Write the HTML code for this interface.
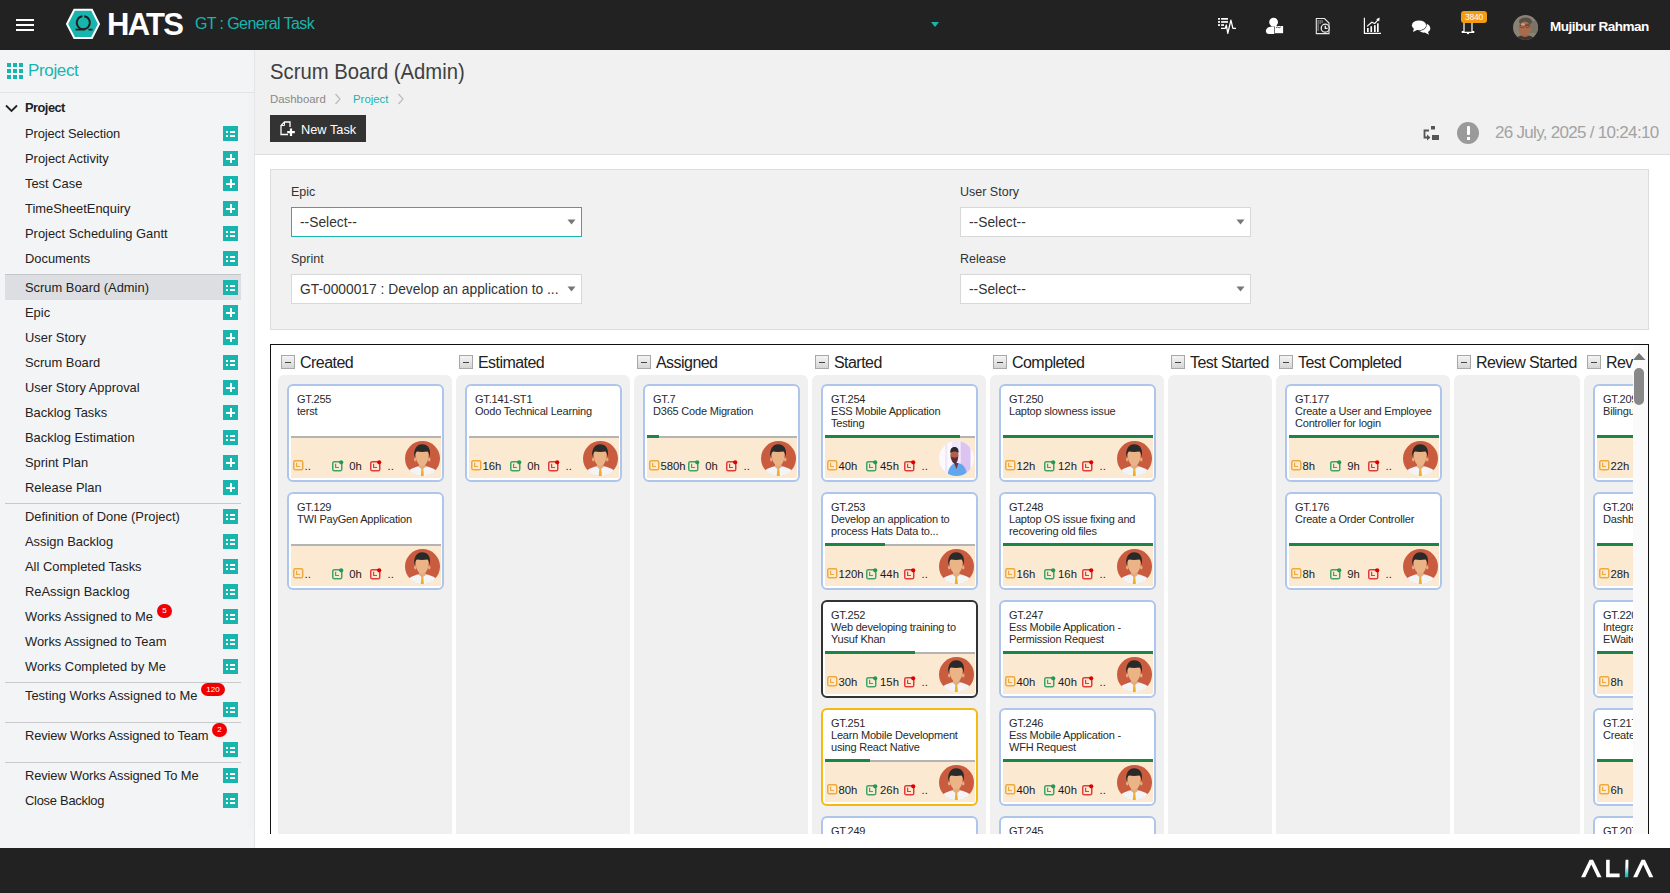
<!DOCTYPE html>
<html><head><meta charset="utf-8"><style>
*{margin:0;padding:0;box-sizing:border-box}
html,body{width:1670px;height:893px;overflow:hidden;background:#fff;font-family:"Liberation Sans", sans-serif}
.t{position:absolute;white-space:nowrap;line-height:1.15}
#hd{position:absolute;left:0;top:0;width:1670px;height:50px;background:#222;z-index:5}
#sb{position:absolute;left:0;top:0;width:255px;height:848px;background:#f3f4f6;border-right:1px solid #e3e4e6}
#sb > *{}
#sbwrap{position:absolute;left:0;top:0}
.hr{position:absolute;height:1px}
.grid i{position:absolute;width:4px;height:4px;background:#17b5ad}
.si{font-size:12.9px;color:#222}
.sic{position:absolute;width:15px;height:15px;background:#17b5ad}
.sic i{position:absolute;background:#fff}
.badge{position:absolute;background:#f00000;color:#fff;font-size:8px;text-align:center;line-height:14px}
#mh{position:absolute;left:255px;top:50px;width:1415px;height:105px;background:#f1f1f1;border-bottom:1px solid #dedede}
#fp{position:absolute;left:270px;top:169px;width:1379px;height:161px;background:#f1f1f1;border:1px solid #dcdcdc}
.fl{font-size:12.5px;color:#333}
.sel{position:absolute;width:291px;height:30px;background:#fff;border:1px solid #d8d8d8}
#bd{position:absolute;left:270px;top:344px;width:1379px;height:490px;border:1px solid #111;border-bottom:none;overflow:hidden}
#bdin{position:absolute;left:0;top:0;width:1363px;height:490px;overflow:hidden}
#sbar{position:absolute;left:1362px;top:0;width:16px;height:490px;background:#fafafa}
.colbg{position:absolute;height:600px;background:#f0f0f0;border-radius:6px}
.cbx{position:absolute;width:14px;height:14px;border:1px solid #a8a8a8;background:linear-gradient(#f4f4f4,#d6d6d6)}
.cbx i{position:absolute;left:3px;top:5.5px;width:6px;height:1.5px;background:#444}
.ch{font-size:16px;letter-spacing:-0.55px;color:#222}
.card{position:absolute;width:157px;height:98px;border:2px solid #aec6ec;border-radius:6px;background:#fff;overflow:hidden}
.ct{position:absolute;left:8px;top:7px;font-size:11px;letter-spacing:-0.2px;line-height:12px;color:#2a2a2a;white-space:nowrap}
.cl{position:absolute;left:1.5px;top:50px;width:150px;height:2px;background:#b4b4b4}
.pg{position:absolute;left:0;top:-1px;height:3px;background:#1b8449}
.cf{position:absolute;left:1.5px;top:52px;width:150px;height:40px;background:#fce9d1}
.ic{position:absolute;top:22px}
.cn{position:absolute;top:22px;font-size:11.3px;color:#1a1a1a;white-space:nowrap}
.av{position:absolute;left:114.5px;top:3px}
#ft{position:absolute;left:0;top:848px;width:1670px;height:45px;background:#222}
</style></head><body>
<div id="hd">
<div style="position:absolute;left:16px;top:19px;width:18px;height:2.2px;background:#fff"></div>
<div style="position:absolute;left:16px;top:24px;width:18px;height:2.2px;background:#fff"></div>
<div style="position:absolute;left:16px;top:29px;width:18px;height:2.2px;background:#fff"></div>
<svg style="position:absolute;left:62px;top:5px" width="42" height="38" viewBox="0 0 42 38">
<polygon points="12.3,4.8 29.9,4.8 37,19 29.9,33 12.3,33 5,19" fill="#17b5ad" stroke="#fff" stroke-width="2"/>
<path d="M20.4 11.2 A6.5 6.5 0 1 0 22.2 11.2" fill="none" stroke="#2a1c1c" stroke-width="1.9"/>
<path d="M13.5 24.6 H23 M26.5 24.6 H30.5" stroke="#2a1c1c" stroke-width="1.9"/>
</svg>
<div class="t" style="left:107px;top:6.9px;font-size:31px;font-weight:bold;color:#fff;letter-spacing:-1.75px">HATS</div>
<div class="t" style="left:195px;top:15px;font-size:16px;letter-spacing:-0.6px;color:#17b5ad">GT : General Task</div>
<svg style="position:absolute;left:930px;top:21px" width="10" height="7"><path d="M1 1 H9 L5 6 Z" fill="#17b5ad"/></svg>

<svg style="position:absolute;left:1217px;top:17px" width="20" height="18" viewBox="0 0 20 18">
<g fill="#fff"><rect x="1" y="1" width="2" height="1.7"/><rect x="4.1" y="1" width="6.9" height="1.7"/>
<rect x="1" y="4.1" width="2" height="1.7"/><rect x="4.1" y="4.1" width="6.9" height="1.7"/>
<rect x="1" y="7.2" width="2" height="1.7"/><rect x="4.1" y="7.2" width="2.9" height="1.7"/></g>
<path d="M4 11.3 H8.3 L9.3 8 L10.8 16.3 L13.9 3.2 L15.9 11.3 H19" fill="none" stroke="#fff" stroke-width="1.3" stroke-linejoin="round"/></svg>
<svg style="position:absolute;left:1265px;top:17px" width="19" height="18" viewBox="0 0 19 18">
<circle cx="8.6" cy="5.1" r="4.4" fill="#fff"/><path d="M0.9 14 C0.9 11 4 9.4 8 9.4 L9.3 9.4 V17 L4 17 C2 17 0.9 15.8 0.9 14 Z" fill="#fff"/>
<rect x="9.9" y="9" width="8.2" height="7.2" fill="#fff"/><path d="M10.8 10.8 l1.8 -0.8 1.5 0.8 1.8 -1" stroke="#222" stroke-width="0.7" fill="none"/></svg>
<svg style="position:absolute;left:1315px;top:17px" width="16" height="18" viewBox="0 0 16 18">
<path d="M1.3 1.5 H9.5 L14 6 V16.6 H1.3 Z" fill="none" stroke="#e8e8e8" stroke-width="1.1"/>
<g fill="#999"><rect x="2.6" y="3" width="1" height="11"/><rect x="4.6" y="3" width="1" height="4"/><rect x="6.6" y="3" width="1" height="3"/></g>
<circle cx="10.2" cy="11.2" r="4" fill="#222" stroke="#eee" stroke-width="1.3"/><path d="M10.3 8.8 V11.4 H12.5" stroke="#eee" stroke-width="1.4" fill="none"/></svg>
<svg style="position:absolute;left:1363px;top:17px" width="19" height="18" viewBox="0 0 19 18">
<path d="M1.4 0.7 V16.4 H18" fill="none" stroke="#fff" stroke-width="1.2"/>
<g fill="#fff"><rect x="4" y="11" width="1.7" height="4"/><rect x="7.4" y="9.2" width="1.7" height="5.8"/><rect x="11" y="8.2" width="1.7" height="6.8"/><rect x="14" y="6.3" width="1.7" height="8.7"/></g>
<path d="M4 9.4 L8.8 5.2 L11.7 6.6 L15.2 2.6" stroke="#fff" stroke-width="1.2" fill="none"/><path d="M13.2 2.2 L16.6 0.4 L16.3 4.4 Z" fill="#fff"/></svg>
<svg style="position:absolute;left:1411px;top:20px" width="20" height="15" viewBox="0 0 20 15">
<ellipse cx="8" cy="5.3" rx="7.1" ry="4.9" fill="#fff"/><path d="M3 8 L2 12 L7 9.5 Z" fill="#fff"/>
<path d="M15.8 3.8 C18.2 5 19.3 6.5 19.3 8.3 C19.3 10 18.4 11.3 17 12 L18 14.8 L13.8 12.6 C11.5 12.8 9.5 12 8.3 10.8 C12.5 10.8 16 8.3 15.8 3.8 Z" fill="#fff"/>
</svg>
<svg style="position:absolute;left:1460px;top:20px" width="16" height="15" viewBox="0 0 16 15">
<path d="M4 1 V11.5 H2.3 V12.4 H13.7 V11.5 H12 V1" fill="none" stroke="#fff" stroke-width="1.2"/><circle cx="8" cy="13.2" r="1.1" fill="#fff"/></svg>

<div class="badge" style="left:1461px;top:11px;width:26px;height:12px;border-radius:3px;background:#f39c12;font-size:8.5px;letter-spacing:-0.2px;line-height:12px">3840</div>
<svg style="position:absolute;left:1513px;top:15px" width="25" height="25" viewBox="0 0 25 25">
<defs><clipPath id="ac"><circle cx="12.5" cy="12.5" r="12.5"/></clipPath></defs>
<g clip-path="url(#ac)"><rect width="25" height="25" fill="#8a8272"/><rect x="17" y="6" width="8" height="12" fill="#7a7466"/>
<ellipse cx="12.5" cy="6.5" rx="6.5" ry="4" fill="#55504a"/>
<path d="M3 25 C4 21 7 20.5 12 20.5 C17 20.5 20 21 22 25 Z" fill="#3a3434"/>
<rect x="9.5" y="17" width="5" height="5" fill="#9a5a40"/>
<ellipse cx="11.8" cy="13.8" rx="6" ry="7.2" fill="#a86b4d"/>
<path d="M6.5 10 H17" stroke="#55463e" stroke-width="1"/><ellipse cx="9" cy="11.5" rx="2" ry="1.2" fill="none" stroke="#4a3c36" stroke-width="0.6"/><ellipse cx="14.5" cy="11.5" rx="2" ry="1.2" fill="none" stroke="#4a3c36" stroke-width="0.6"/>
<ellipse cx="10" cy="9.5" rx="2" ry="1.3" fill="#d4a080"/></g></svg>
<div class="t" style="left:1550px;top:18.8px;font-size:13.5px;font-weight:bold;color:#fff;letter-spacing:-0.5px">Mujibur Rahman</div>
</div>
<div id="sb">
<div class="grid"><i style="left:7px;top:63px"></i><i style="left:13px;top:63px"></i><i style="left:19px;top:63px"></i><i style="left:7px;top:69px"></i><i style="left:13px;top:69px"></i><i style="left:19px;top:69px"></i><i style="left:7px;top:75px"></i><i style="left:13px;top:75px"></i><i style="left:19px;top:75px"></i></div>
<div class="t" style="left:28px;top:61px;font-size:17px;letter-spacing:-0.35px;color:#17b5ad">Project</div>
<div style="position:absolute;left:248px;top:93px;width:6px;height:734px;background:#f2f2f3"></div>
<div class="hr" style="left:0;top:92px;width:254px;background:#e2e3e5"></div>
<svg style="position:absolute;left:5px;top:104px" width="13" height="9" viewBox="0 0 13 9"><path d="M1 1.5 L6.5 7 L12 1.5" fill="none" stroke="#222" stroke-width="1.8"/></svg>
<div class="t" style="left:25px;top:100.5px;font-size:12.8px;letter-spacing:-0.5px;font-weight:bold;color:#222">Project</div>
<div class="t si" style="left:25px;top:126.5px;letter-spacing:-0.1px">Project Selection</div>
<div class="sic" style="left:223px;top:126px"><i style="left:3px;top:4.6px;width:2.2px;height:2px"></i><i style="left:7px;top:4.6px;width:5px;height:2px"></i><i style="left:3px;top:8.8px;width:2.2px;height:2px"></i><i style="left:7px;top:8.8px;width:5px;height:2px"></i></div>
<div class="t si" style="left:25px;top:151.5px;letter-spacing:0px">Project Activity</div>
<div class="sic" style="left:223px;top:151px"><i style="left:3px;top:6.5px;width:9px;height:2px"></i><i style="left:6.5px;top:3px;width:2px;height:9px"></i></div>
<div class="t si" style="left:25px;top:176.5px;letter-spacing:0px">Test Case</div>
<div class="sic" style="left:223px;top:176px"><i style="left:3px;top:6.5px;width:9px;height:2px"></i><i style="left:6.5px;top:3px;width:2px;height:9px"></i></div>
<div class="t si" style="left:25px;top:201.5px;letter-spacing:0px">TimeSheetEnquiry</div>
<div class="sic" style="left:223px;top:201px"><i style="left:3px;top:6.5px;width:9px;height:2px"></i><i style="left:6.5px;top:3px;width:2px;height:9px"></i></div>
<div class="t si" style="left:25px;top:226.5px;letter-spacing:0px">Project Scheduling Gantt</div>
<div class="sic" style="left:223px;top:226px"><i style="left:3px;top:4.6px;width:2.2px;height:2px"></i><i style="left:7px;top:4.6px;width:5px;height:2px"></i><i style="left:3px;top:8.8px;width:2.2px;height:2px"></i><i style="left:7px;top:8.8px;width:5px;height:2px"></i></div>
<div class="t si" style="left:25px;top:251.5px;letter-spacing:0px">Documents</div>
<div class="sic" style="left:223px;top:251px"><i style="left:3px;top:4.6px;width:2.2px;height:2px"></i><i style="left:7px;top:4.6px;width:5px;height:2px"></i><i style="left:3px;top:8.8px;width:2.2px;height:2px"></i><i style="left:7px;top:8.8px;width:5px;height:2px"></i></div>
<div class="hr" style="left:5px;top:274px;width:236px;background:#c9c9c9"></div>
<div style="position:absolute;left:5px;top:274px;width:236px;height:26px;background:#dcdee2;border-top:1px solid #c4c6ca;box-sizing:border-box"></div>
<div class="t si" style="left:25px;top:280.5px;letter-spacing:0px">Scrum Board (Admin)</div>
<div class="sic" style="left:223px;top:280px"><i style="left:3px;top:4.6px;width:2.2px;height:2px"></i><i style="left:7px;top:4.6px;width:5px;height:2px"></i><i style="left:3px;top:8.8px;width:2.2px;height:2px"></i><i style="left:7px;top:8.8px;width:5px;height:2px"></i></div>
<div class="t si" style="left:25px;top:305.5px;letter-spacing:0px">Epic</div>
<div class="sic" style="left:223px;top:305px"><i style="left:3px;top:6.5px;width:9px;height:2px"></i><i style="left:6.5px;top:3px;width:2px;height:9px"></i></div>
<div class="t si" style="left:25px;top:330.5px;letter-spacing:0px">User Story</div>
<div class="sic" style="left:223px;top:330px"><i style="left:3px;top:6.5px;width:9px;height:2px"></i><i style="left:6.5px;top:3px;width:2px;height:9px"></i></div>
<div class="t si" style="left:25px;top:355.5px;letter-spacing:0px">Scrum Board</div>
<div class="sic" style="left:223px;top:355px"><i style="left:3px;top:4.6px;width:2.2px;height:2px"></i><i style="left:7px;top:4.6px;width:5px;height:2px"></i><i style="left:3px;top:8.8px;width:2.2px;height:2px"></i><i style="left:7px;top:8.8px;width:5px;height:2px"></i></div>
<div class="t si" style="left:25px;top:380.5px;letter-spacing:0px">User Story Approval</div>
<div class="sic" style="left:223px;top:380px"><i style="left:3px;top:6.5px;width:9px;height:2px"></i><i style="left:6.5px;top:3px;width:2px;height:9px"></i></div>
<div class="t si" style="left:25px;top:405.5px;letter-spacing:0px">Backlog Tasks</div>
<div class="sic" style="left:223px;top:405px"><i style="left:3px;top:6.5px;width:9px;height:2px"></i><i style="left:6.5px;top:3px;width:2px;height:9px"></i></div>
<div class="t si" style="left:25px;top:430.5px;letter-spacing:0px">Backlog Estimation</div>
<div class="sic" style="left:223px;top:430px"><i style="left:3px;top:4.6px;width:2.2px;height:2px"></i><i style="left:7px;top:4.6px;width:5px;height:2px"></i><i style="left:3px;top:8.8px;width:2.2px;height:2px"></i><i style="left:7px;top:8.8px;width:5px;height:2px"></i></div>
<div class="t si" style="left:25px;top:455.5px;letter-spacing:0px">Sprint Plan</div>
<div class="sic" style="left:223px;top:455px"><i style="left:3px;top:6.5px;width:9px;height:2px"></i><i style="left:6.5px;top:3px;width:2px;height:9px"></i></div>
<div class="t si" style="left:25px;top:480.5px;letter-spacing:0px">Release Plan</div>
<div class="sic" style="left:223px;top:480px"><i style="left:3px;top:6.5px;width:9px;height:2px"></i><i style="left:6.5px;top:3px;width:2px;height:9px"></i></div>
<div class="hr" style="left:5px;top:503px;width:236px;background:#c9c9c9"></div>
<div class="t si" style="left:25px;top:509.5px;letter-spacing:0px">Definition of Done (Project)</div>
<div class="sic" style="left:223px;top:509px"><i style="left:3px;top:4.6px;width:2.2px;height:2px"></i><i style="left:7px;top:4.6px;width:5px;height:2px"></i><i style="left:3px;top:8.8px;width:2.2px;height:2px"></i><i style="left:7px;top:8.8px;width:5px;height:2px"></i></div>
<div class="t si" style="left:25px;top:534.5px;letter-spacing:0px">Assign Backlog</div>
<div class="sic" style="left:223px;top:534px"><i style="left:3px;top:4.6px;width:2.2px;height:2px"></i><i style="left:7px;top:4.6px;width:5px;height:2px"></i><i style="left:3px;top:8.8px;width:2.2px;height:2px"></i><i style="left:7px;top:8.8px;width:5px;height:2px"></i></div>
<div class="t si" style="left:25px;top:559.5px;letter-spacing:0px">All Completed Tasks</div>
<div class="sic" style="left:223px;top:559px"><i style="left:3px;top:4.6px;width:2.2px;height:2px"></i><i style="left:7px;top:4.6px;width:5px;height:2px"></i><i style="left:3px;top:8.8px;width:2.2px;height:2px"></i><i style="left:7px;top:8.8px;width:5px;height:2px"></i></div>
<div class="t si" style="left:25px;top:584.5px;letter-spacing:0px">ReAssign Backlog</div>
<div class="sic" style="left:223px;top:584px"><i style="left:3px;top:4.6px;width:2.2px;height:2px"></i><i style="left:7px;top:4.6px;width:5px;height:2px"></i><i style="left:3px;top:8.8px;width:2.2px;height:2px"></i><i style="left:7px;top:8.8px;width:5px;height:2px"></i></div>
<div class="t si" style="left:25px;top:609.5px;letter-spacing:0px">Works Assigned to Me</div>
<div class="sic" style="left:223px;top:609px"><i style="left:3px;top:4.6px;width:2.2px;height:2px"></i><i style="left:7px;top:4.6px;width:5px;height:2px"></i><i style="left:3px;top:8.8px;width:2.2px;height:2px"></i><i style="left:7px;top:8.8px;width:5px;height:2px"></i></div>
<div class="badge" style="left:157px;top:604px;width:15px;height:14px;border-radius:8px">5</div>
<div class="t si" style="left:25px;top:634.5px;letter-spacing:0px">Works Assigned to Team</div>
<div class="sic" style="left:223px;top:634px"><i style="left:3px;top:4.6px;width:2.2px;height:2px"></i><i style="left:7px;top:4.6px;width:5px;height:2px"></i><i style="left:3px;top:8.8px;width:2.2px;height:2px"></i><i style="left:7px;top:8.8px;width:5px;height:2px"></i></div>
<div class="t si" style="left:25px;top:659.5px;letter-spacing:0px">Works Completed by Me</div>
<div class="sic" style="left:223px;top:659px"><i style="left:3px;top:4.6px;width:2.2px;height:2px"></i><i style="left:7px;top:4.6px;width:5px;height:2px"></i><i style="left:3px;top:8.8px;width:2.2px;height:2px"></i><i style="left:7px;top:8.8px;width:5px;height:2px"></i></div>
<div class="hr" style="left:5px;top:682px;width:236px;background:#c9c9c9"></div>
<div class="t si" style="left:25px;top:688.5px;letter-spacing:0px">Testing Works Assigned to Me</div>
<div class="sic" style="left:223px;top:702px"><i style="left:3px;top:4.6px;width:2.2px;height:2px"></i><i style="left:7px;top:4.6px;width:5px;height:2px"></i><i style="left:3px;top:8.8px;width:2.2px;height:2px"></i><i style="left:7px;top:8.8px;width:5px;height:2px"></i></div>
<div class="badge" style="left:201px;top:683px;width:24px;height:13px;border-radius:7px">120</div>
<div class="hr" style="left:5px;top:722px;width:236px;background:#c9c9c9"></div>
<div class="t si" style="left:25px;top:728.5px;letter-spacing:-0.13px">Review Works Assigned to Team</div>
<div class="sic" style="left:223px;top:742px"><i style="left:3px;top:4.6px;width:2.2px;height:2px"></i><i style="left:7px;top:4.6px;width:5px;height:2px"></i><i style="left:3px;top:8.8px;width:2.2px;height:2px"></i><i style="left:7px;top:8.8px;width:5px;height:2px"></i></div>
<div class="badge" style="left:212px;top:723px;width:15px;height:14px;border-radius:8px">2</div>
<div class="hr" style="left:5px;top:762px;width:236px;background:#c9c9c9"></div>
<div class="t si" style="left:25px;top:768.5px;letter-spacing:-0.11px">Review Works Assigned To Me</div>
<div class="sic" style="left:223px;top:768px"><i style="left:3px;top:4.6px;width:2.2px;height:2px"></i><i style="left:7px;top:4.6px;width:5px;height:2px"></i><i style="left:3px;top:8.8px;width:2.2px;height:2px"></i><i style="left:7px;top:8.8px;width:5px;height:2px"></i></div>
<div class="t si" style="left:25px;top:793.5px;letter-spacing:-0.25px">Close Backlog</div>
<div class="sic" style="left:223px;top:793px"><i style="left:3px;top:4.6px;width:2.2px;height:2px"></i><i style="left:7px;top:4.6px;width:5px;height:2px"></i><i style="left:3px;top:8.8px;width:2.2px;height:2px"></i><i style="left:7px;top:8.8px;width:5px;height:2px"></i></div>
</div>
<div id="mh">
<div class="t" style="left:15px;top:8.5px;font-size:22.5px;color:#404040;transform:scaleX(0.9);transform-origin:0 0">Scrum Board (Admin)</div>
<div class="t" style="left:15px;top:42.5px;font-size:11.4px;color:#888">Dashboard</div>
<svg style="position:absolute;left:79px;top:43px" width="8" height="12"><path d="M1.5 1 L6 6 L1.5 11" fill="none" stroke="#bbb" stroke-width="1.2"/></svg>
<div class="t" style="left:98px;top:42.5px;font-size:11.4px;color:#17b5ad">Project</div>
<svg style="position:absolute;left:142px;top:43px" width="8" height="12"><path d="M1.5 1 L6 6 L1.5 11" fill="none" stroke="#bbb" stroke-width="1.2"/></svg>
<div style="position:absolute;left:15px;top:65px;width:96px;height:27px;background:#333">
<svg style="position:absolute;left:10px;top:6px" width="15" height="16" viewBox="0 0 15 16"><path d="M8 13.5 H1 V4.5 L4.5 1 H10 V6" fill="none" stroke="#fff" stroke-width="1.3"/><path d="M4.5 1 V4.5 H1" fill="none" stroke="#fff" stroke-width="1"/><path d="M11 7.5 V15 M7.2 11.2 H14.8" stroke="#fff" stroke-width="2.2"/></svg>
<div class="t" style="left:31px;top:8px;font-size:12.8px;color:#fff">New Task</div></div>
<svg style="position:absolute;left:1168px;top:76px" width="17" height="15" viewBox="0 0 17 15"><g fill="#555"><rect x="8" y="0" width="4" height="3.5"/><rect x="9" y="9" width="7" height="5"/></g><path d="M6 4.5 H1.5 V11.5 H5" fill="none" stroke="#555" stroke-width="1.8"/><path d="M4 8.5 L7.5 11.5 L4 14.5 Z" fill="#555"/></svg>
<div style="position:absolute;left:1202px;top:72px;width:22px;height:22px;border-radius:50%;background:#9a9a9a"></div>
<div style="position:absolute;left:1211.5px;top:76px;width:3px;height:9px;background:#fff;border-radius:1px"></div>
<div style="position:absolute;left:1211.5px;top:87px;width:3px;height:3px;background:#fff"></div>
<div class="t" style="left:1240px;top:73.4px;font-size:17px;letter-spacing:-0.7px;color:#a3a3a3">26 July, 2025 / 10:24:10</div>
</div>
<div id="fp">
<div class="t fl" style="left:20px;top:15px">Epic</div>
<div class="sel" style="left:20px;top:37px;border-color:#17b5ad"><div class="t" style="left:8px;top:6.5px;font-size:13.8px;color:#333">--Select--</div><svg style="position:absolute;left:275px;top:11px" width="9" height="6"><path d="M0.5 0.5 H8.5 L4.5 5.5 Z" fill="#777"/></svg></div>
<div class="t fl" style="left:20px;top:82px">Sprint</div>
<div class="sel" style="left:20px;top:104px;border-color:#d8d8d8"><div class="t" style="left:8px;top:6.5px;font-size:13.8px;color:#333">GT-0000017 : Develop an application to ...</div><svg style="position:absolute;left:275px;top:11px" width="9" height="6"><path d="M0.5 0.5 H8.5 L4.5 5.5 Z" fill="#777"/></svg></div>
<div class="t fl" style="left:689px;top:15px">User Story</div>
<div class="sel" style="left:689px;top:37px;border-color:#d8d8d8"><div class="t" style="left:8px;top:6.5px;font-size:13.8px;color:#333">--Select--</div><svg style="position:absolute;left:275px;top:11px" width="9" height="6"><path d="M0.5 0.5 H8.5 L4.5 5.5 Z" fill="#777"/></svg></div>
<div class="t fl" style="left:689px;top:82px">Release</div>
<div class="sel" style="left:689px;top:104px;border-color:#d8d8d8"><div class="t" style="left:8px;top:6.5px;font-size:13.8px;color:#333">--Select--</div><svg style="position:absolute;left:275px;top:11px" width="9" height="6"><path d="M0.5 0.5 H8.5 L4.5 5.5 Z" fill="#777"/></svg></div>
</div>
<div id="bd"><div id="bdin">
<div class="colbg" style="left:7px;top:30px;width:174px"></div>
<div class="cbx" style="left:10px;top:10px"><i></i></div>
<div class="t ch" style="left:29px;top:8.699999999999989px">Created</div>
<div class="colbg" style="left:185px;top:30px;width:174px"></div>
<div class="cbx" style="left:188px;top:10px"><i></i></div>
<div class="t ch" style="left:207px;top:8.699999999999989px">Estimated</div>
<div class="colbg" style="left:363px;top:30px;width:174px"></div>
<div class="cbx" style="left:366px;top:10px"><i></i></div>
<div class="t ch" style="left:385px;top:8.699999999999989px">Assigned</div>
<div class="colbg" style="left:541px;top:30px;width:174px"></div>
<div class="cbx" style="left:544px;top:10px"><i></i></div>
<div class="t ch" style="left:563px;top:8.699999999999989px">Started</div>
<div class="colbg" style="left:719px;top:30px;width:174px"></div>
<div class="cbx" style="left:722px;top:10px"><i></i></div>
<div class="t ch" style="left:741px;top:8.699999999999989px">Completed</div>
<div class="colbg" style="left:897px;top:30px;width:104px"></div>
<div class="cbx" style="left:900px;top:10px"><i></i></div>
<div class="t ch" style="left:919px;top:8.699999999999989px">Test Started</div>
<div class="colbg" style="left:1005px;top:30px;width:174px"></div>
<div class="cbx" style="left:1008px;top:10px"><i></i></div>
<div class="t ch" style="left:1027px;top:8.699999999999989px">Test Completed</div>
<div class="colbg" style="left:1183px;top:30px;width:126px"></div>
<div class="cbx" style="left:1186px;top:10px"><i></i></div>
<div class="t ch" style="left:1205px;top:8.699999999999989px">Review Started</div>
<div class="colbg" style="left:1313px;top:30px;width:174px"></div>
<div class="cbx" style="left:1316px;top:10px"><i></i></div>
<div class="t ch" style="left:1335px;top:8.699999999999989px">Review Completed</div>
<div class="card" style="left:16px;top:39px;border-color:#aec6ec">
<div class="ct"><div>GT.255</div><div>terst</div></div>
<div class="cl"></div>
<div class="cf">
<svg class="ic" style="left:2.5px" width="11" height="11" viewBox="0 0 11 11"><rect x="0.75" y="0.75" width="9" height="9" rx="1.6" fill="none" stroke="#f0a93c" stroke-width="1.5"/><path d="M3.6 2.8 V6.5 H7" fill="none" stroke="#f0a93c" stroke-width="1.2"/></svg>
<div class="cn" style="left:14px">..</div>
<svg class="ic" style="left:41.5px;top:21.5px" width="12" height="12" viewBox="0 0 12 12"><rect x="0.75" y="1.75" width="9" height="9" rx="1.6" fill="none" stroke="#3ba56a" stroke-width="1.5"/><path d="M3.6 3.8 V7.5 H7" fill="none" stroke="#3ba56a" stroke-width="1.2"/><circle cx="9.2" cy="2.3" r="2.1" fill="#1f9a55"/></svg>
<div class="cn" style="left:45px;width:40px;text-align:center">0h</div>
<svg class="ic" style="left:79.5px;top:21.5px" width="12" height="12" viewBox="0 0 12 12"><rect x="0.75" y="1.75" width="9" height="9" rx="1.6" fill="none" stroke="#e23b3b" stroke-width="1.5"/><path d="M3.6 3.8 V7.5 H7" fill="none" stroke="#e23b3b" stroke-width="1.2"/><circle cx="9.2" cy="2.3" r="2.1" fill="#e00000"/></svg>
<div class="cn" style="left:97px">..</div>
<svg class="av" width="35" height="35" viewBox="0 0 35 35"><circle cx="17.5" cy="17.5" r="17.5" fill="#c95c3f"/>
<path d="M4.2 29.2 C7 27 11 26 14 25.3 L17.3 28.2 L20.6 25.3 C24 26 28 27 30.8 29.2 A17.5 17.5 0 0 1 4.2 29.2 Z" fill="#f4f4f6"/>
<path d="M14 21 H20.5 V26 L17.3 28.4 L14 26 Z" fill="#e3ab80"/>
<ellipse cx="10.3" cy="18.5" rx="1.3" ry="2" fill="#e3ab80"/><ellipse cx="24.2" cy="18.5" rx="1.3" ry="2" fill="#e3ab80"/>
<path d="M10.8 12 C10.8 9 13 8.5 17.2 8.5 C21.5 8.5 23.6 9 23.6 12 C23.6 18 22.5 22 19.5 24 C18.3 24.8 16.2 24.8 15 24 C12 22 10.8 18 10.8 12 Z" fill="#ebb486"/>
<path d="M9.2 16 C8.6 9 11 3.2 17.2 3.2 C23.5 3.2 26 8 24.8 16 C24.2 13 23.5 11.2 22.5 10.5 C19 11 15 11 12 10.5 C10.8 11.5 10 13 9.2 16 Z" fill="#2a2a2a"/>
<path d="M16.4 27.8 L18.2 27.8 L18.9 35 L15.7 35 Z" fill="#efb025"/></svg>
</div></div>
<div class="card" style="left:16px;top:147px;border-color:#aec6ec">
<div class="ct"><div>GT.129</div><div>TWI PayGen Application</div></div>
<div class="cl"></div>
<div class="cf">
<svg class="ic" style="left:2.5px" width="11" height="11" viewBox="0 0 11 11"><rect x="0.75" y="0.75" width="9" height="9" rx="1.6" fill="none" stroke="#f0a93c" stroke-width="1.5"/><path d="M3.6 2.8 V6.5 H7" fill="none" stroke="#f0a93c" stroke-width="1.2"/></svg>
<div class="cn" style="left:14px">..</div>
<svg class="ic" style="left:41.5px;top:21.5px" width="12" height="12" viewBox="0 0 12 12"><rect x="0.75" y="1.75" width="9" height="9" rx="1.6" fill="none" stroke="#3ba56a" stroke-width="1.5"/><path d="M3.6 3.8 V7.5 H7" fill="none" stroke="#3ba56a" stroke-width="1.2"/><circle cx="9.2" cy="2.3" r="2.1" fill="#1f9a55"/></svg>
<div class="cn" style="left:45px;width:40px;text-align:center">0h</div>
<svg class="ic" style="left:79.5px;top:21.5px" width="12" height="12" viewBox="0 0 12 12"><rect x="0.75" y="1.75" width="9" height="9" rx="1.6" fill="none" stroke="#e23b3b" stroke-width="1.5"/><path d="M3.6 3.8 V7.5 H7" fill="none" stroke="#e23b3b" stroke-width="1.2"/><circle cx="9.2" cy="2.3" r="2.1" fill="#e00000"/></svg>
<div class="cn" style="left:97px">..</div>
<svg class="av" width="35" height="35" viewBox="0 0 35 35"><circle cx="17.5" cy="17.5" r="17.5" fill="#c95c3f"/>
<path d="M4.2 29.2 C7 27 11 26 14 25.3 L17.3 28.2 L20.6 25.3 C24 26 28 27 30.8 29.2 A17.5 17.5 0 0 1 4.2 29.2 Z" fill="#f4f4f6"/>
<path d="M14 21 H20.5 V26 L17.3 28.4 L14 26 Z" fill="#e3ab80"/>
<ellipse cx="10.3" cy="18.5" rx="1.3" ry="2" fill="#e3ab80"/><ellipse cx="24.2" cy="18.5" rx="1.3" ry="2" fill="#e3ab80"/>
<path d="M10.8 12 C10.8 9 13 8.5 17.2 8.5 C21.5 8.5 23.6 9 23.6 12 C23.6 18 22.5 22 19.5 24 C18.3 24.8 16.2 24.8 15 24 C12 22 10.8 18 10.8 12 Z" fill="#ebb486"/>
<path d="M9.2 16 C8.6 9 11 3.2 17.2 3.2 C23.5 3.2 26 8 24.8 16 C24.2 13 23.5 11.2 22.5 10.5 C19 11 15 11 12 10.5 C10.8 11.5 10 13 9.2 16 Z" fill="#2a2a2a"/>
<path d="M16.4 27.8 L18.2 27.8 L18.9 35 L15.7 35 Z" fill="#efb025"/></svg>
</div></div>
<div class="card" style="left:194px;top:39px;border-color:#aec6ec">
<div class="ct"><div>GT.141-ST1</div><div>Oodo Technical Learning</div></div>
<div class="cl"></div>
<div class="cf">
<svg class="ic" style="left:2.5px" width="11" height="11" viewBox="0 0 11 11"><rect x="0.75" y="0.75" width="9" height="9" rx="1.6" fill="none" stroke="#f0a93c" stroke-width="1.5"/><path d="M3.6 2.8 V6.5 H7" fill="none" stroke="#f0a93c" stroke-width="1.2"/></svg>
<div class="cn" style="left:14px">16h</div>
<svg class="ic" style="left:41.5px;top:21.5px" width="12" height="12" viewBox="0 0 12 12"><rect x="0.75" y="1.75" width="9" height="9" rx="1.6" fill="none" stroke="#3ba56a" stroke-width="1.5"/><path d="M3.6 3.8 V7.5 H7" fill="none" stroke="#3ba56a" stroke-width="1.2"/><circle cx="9.2" cy="2.3" r="2.1" fill="#1f9a55"/></svg>
<div class="cn" style="left:45px;width:40px;text-align:center">0h</div>
<svg class="ic" style="left:79.5px;top:21.5px" width="12" height="12" viewBox="0 0 12 12"><rect x="0.75" y="1.75" width="9" height="9" rx="1.6" fill="none" stroke="#e23b3b" stroke-width="1.5"/><path d="M3.6 3.8 V7.5 H7" fill="none" stroke="#e23b3b" stroke-width="1.2"/><circle cx="9.2" cy="2.3" r="2.1" fill="#e00000"/></svg>
<div class="cn" style="left:97px">..</div>
<svg class="av" width="35" height="35" viewBox="0 0 35 35"><circle cx="17.5" cy="17.5" r="17.5" fill="#c95c3f"/>
<path d="M4.2 29.2 C7 27 11 26 14 25.3 L17.3 28.2 L20.6 25.3 C24 26 28 27 30.8 29.2 A17.5 17.5 0 0 1 4.2 29.2 Z" fill="#f4f4f6"/>
<path d="M14 21 H20.5 V26 L17.3 28.4 L14 26 Z" fill="#e3ab80"/>
<ellipse cx="10.3" cy="18.5" rx="1.3" ry="2" fill="#e3ab80"/><ellipse cx="24.2" cy="18.5" rx="1.3" ry="2" fill="#e3ab80"/>
<path d="M10.8 12 C10.8 9 13 8.5 17.2 8.5 C21.5 8.5 23.6 9 23.6 12 C23.6 18 22.5 22 19.5 24 C18.3 24.8 16.2 24.8 15 24 C12 22 10.8 18 10.8 12 Z" fill="#ebb486"/>
<path d="M9.2 16 C8.6 9 11 3.2 17.2 3.2 C23.5 3.2 26 8 24.8 16 C24.2 13 23.5 11.2 22.5 10.5 C19 11 15 11 12 10.5 C10.8 11.5 10 13 9.2 16 Z" fill="#2a2a2a"/>
<path d="M16.4 27.8 L18.2 27.8 L18.9 35 L15.7 35 Z" fill="#efb025"/></svg>
</div></div>
<div class="card" style="left:372px;top:39px;border-color:#aec6ec">
<div class="ct"><div>GT.7</div><div>D365 Code Migration</div></div>
<div class="cl"><div class="pg" style="width:8%"></div></div>
<div class="cf">
<svg class="ic" style="left:2.5px" width="11" height="11" viewBox="0 0 11 11"><rect x="0.75" y="0.75" width="9" height="9" rx="1.6" fill="none" stroke="#f0a93c" stroke-width="1.5"/><path d="M3.6 2.8 V6.5 H7" fill="none" stroke="#f0a93c" stroke-width="1.2"/></svg>
<div class="cn" style="left:14px">580h</div>
<svg class="ic" style="left:41.5px;top:21.5px" width="12" height="12" viewBox="0 0 12 12"><rect x="0.75" y="1.75" width="9" height="9" rx="1.6" fill="none" stroke="#3ba56a" stroke-width="1.5"/><path d="M3.6 3.8 V7.5 H7" fill="none" stroke="#3ba56a" stroke-width="1.2"/><circle cx="9.2" cy="2.3" r="2.1" fill="#1f9a55"/></svg>
<div class="cn" style="left:45px;width:40px;text-align:center">0h</div>
<svg class="ic" style="left:79.5px;top:21.5px" width="12" height="12" viewBox="0 0 12 12"><rect x="0.75" y="1.75" width="9" height="9" rx="1.6" fill="none" stroke="#e23b3b" stroke-width="1.5"/><path d="M3.6 3.8 V7.5 H7" fill="none" stroke="#e23b3b" stroke-width="1.2"/><circle cx="9.2" cy="2.3" r="2.1" fill="#e00000"/></svg>
<div class="cn" style="left:97px">..</div>
<svg class="av" width="35" height="35" viewBox="0 0 35 35"><circle cx="17.5" cy="17.5" r="17.5" fill="#c95c3f"/>
<path d="M4.2 29.2 C7 27 11 26 14 25.3 L17.3 28.2 L20.6 25.3 C24 26 28 27 30.8 29.2 A17.5 17.5 0 0 1 4.2 29.2 Z" fill="#f4f4f6"/>
<path d="M14 21 H20.5 V26 L17.3 28.4 L14 26 Z" fill="#e3ab80"/>
<ellipse cx="10.3" cy="18.5" rx="1.3" ry="2" fill="#e3ab80"/><ellipse cx="24.2" cy="18.5" rx="1.3" ry="2" fill="#e3ab80"/>
<path d="M10.8 12 C10.8 9 13 8.5 17.2 8.5 C21.5 8.5 23.6 9 23.6 12 C23.6 18 22.5 22 19.5 24 C18.3 24.8 16.2 24.8 15 24 C12 22 10.8 18 10.8 12 Z" fill="#ebb486"/>
<path d="M9.2 16 C8.6 9 11 3.2 17.2 3.2 C23.5 3.2 26 8 24.8 16 C24.2 13 23.5 11.2 22.5 10.5 C19 11 15 11 12 10.5 C10.8 11.5 10 13 9.2 16 Z" fill="#2a2a2a"/>
<path d="M16.4 27.8 L18.2 27.8 L18.9 35 L15.7 35 Z" fill="#efb025"/></svg>
</div></div>
<div class="card" style="left:550px;top:39px;border-color:#aec6ec">
<div class="ct"><div>GT.254</div><div>ESS Mobile Application</div><div>Testing</div></div>
<div class="cl"><div class="pg" style="width:90%"></div></div>
<div class="cf">
<svg class="ic" style="left:2.5px" width="11" height="11" viewBox="0 0 11 11"><rect x="0.75" y="0.75" width="9" height="9" rx="1.6" fill="none" stroke="#f0a93c" stroke-width="1.5"/><path d="M3.6 2.8 V6.5 H7" fill="none" stroke="#f0a93c" stroke-width="1.2"/></svg>
<div class="cn" style="left:14px">40h</div>
<svg class="ic" style="left:41.5px;top:21.5px" width="12" height="12" viewBox="0 0 12 12"><rect x="0.75" y="1.75" width="9" height="9" rx="1.6" fill="none" stroke="#3ba56a" stroke-width="1.5"/><path d="M3.6 3.8 V7.5 H7" fill="none" stroke="#3ba56a" stroke-width="1.2"/><circle cx="9.2" cy="2.3" r="2.1" fill="#1f9a55"/></svg>
<div class="cn" style="left:45px;width:40px;text-align:center">45h</div>
<svg class="ic" style="left:79.5px;top:21.5px" width="12" height="12" viewBox="0 0 12 12"><rect x="0.75" y="1.75" width="9" height="9" rx="1.6" fill="none" stroke="#e23b3b" stroke-width="1.5"/><path d="M3.6 3.8 V7.5 H7" fill="none" stroke="#e23b3b" stroke-width="1.2"/><circle cx="9.2" cy="2.3" r="2.1" fill="#e00000"/></svg>
<div class="cn" style="left:97px">..</div>
<svg class="av" width="35" height="35" viewBox="0 0 35 35"><defs><clipPath id="ph"><circle cx="17.5" cy="17.5" r="17.5"/></clipPath></defs><g clip-path="url(#ph)"><rect width="35" height="35" fill="#fbf9fe"/><rect x="6" y="0" width="2.5" height="35" fill="#f1e9fb"/><rect x="12.8" y="0" width="8" height="35" fill="#f0e6fb"/><rect x="21.5" y="0" width="10" height="35" fill="#dcc3f2"/>
<path d="M8.5 35 C9 28 11.5 24 15.5 22.5 L21 22.5 C25 24 27.5 28 28 35 Z" fill="#62a6ee"/>
<path d="M15 22 L19.5 22 L17.5 28 Z" fill="#7a2f3a"/>
<ellipse cx="15.4" cy="14.5" rx="4.1" ry="6.5" fill="#b0604a"/><path d="M12 15.5 C12.5 20 14 22.5 16 22.5 C18 22.5 19 19 19 15.5 C17.5 17 14 17 12 15.5 Z" fill="#5e2a38"/>
<path d="M11.2 12 C11.2 7.5 13 6 15.5 6 C18 6 19.8 7.5 19.6 12 C18 10 13.5 10 11.2 12 Z" fill="#2e2630"/></g></svg>
</div></div>
<div class="card" style="left:550px;top:147px;border-color:#aec6ec">
<div class="ct"><div>GT.253</div><div>Develop an application to</div><div>process Hats Data to...</div></div>
<div class="cl"><div class="pg" style="width:40%"></div></div>
<div class="cf">
<svg class="ic" style="left:2.5px" width="11" height="11" viewBox="0 0 11 11"><rect x="0.75" y="0.75" width="9" height="9" rx="1.6" fill="none" stroke="#f0a93c" stroke-width="1.5"/><path d="M3.6 2.8 V6.5 H7" fill="none" stroke="#f0a93c" stroke-width="1.2"/></svg>
<div class="cn" style="left:14px">120h</div>
<svg class="ic" style="left:41.5px;top:21.5px" width="12" height="12" viewBox="0 0 12 12"><rect x="0.75" y="1.75" width="9" height="9" rx="1.6" fill="none" stroke="#3ba56a" stroke-width="1.5"/><path d="M3.6 3.8 V7.5 H7" fill="none" stroke="#3ba56a" stroke-width="1.2"/><circle cx="9.2" cy="2.3" r="2.1" fill="#1f9a55"/></svg>
<div class="cn" style="left:45px;width:40px;text-align:center">44h</div>
<svg class="ic" style="left:79.5px;top:21.5px" width="12" height="12" viewBox="0 0 12 12"><rect x="0.75" y="1.75" width="9" height="9" rx="1.6" fill="none" stroke="#e23b3b" stroke-width="1.5"/><path d="M3.6 3.8 V7.5 H7" fill="none" stroke="#e23b3b" stroke-width="1.2"/><circle cx="9.2" cy="2.3" r="2.1" fill="#e00000"/></svg>
<div class="cn" style="left:97px">..</div>
<svg class="av" width="35" height="35" viewBox="0 0 35 35"><circle cx="17.5" cy="17.5" r="17.5" fill="#c95c3f"/>
<path d="M4.2 29.2 C7 27 11 26 14 25.3 L17.3 28.2 L20.6 25.3 C24 26 28 27 30.8 29.2 A17.5 17.5 0 0 1 4.2 29.2 Z" fill="#f4f4f6"/>
<path d="M14 21 H20.5 V26 L17.3 28.4 L14 26 Z" fill="#e3ab80"/>
<ellipse cx="10.3" cy="18.5" rx="1.3" ry="2" fill="#e3ab80"/><ellipse cx="24.2" cy="18.5" rx="1.3" ry="2" fill="#e3ab80"/>
<path d="M10.8 12 C10.8 9 13 8.5 17.2 8.5 C21.5 8.5 23.6 9 23.6 12 C23.6 18 22.5 22 19.5 24 C18.3 24.8 16.2 24.8 15 24 C12 22 10.8 18 10.8 12 Z" fill="#ebb486"/>
<path d="M9.2 16 C8.6 9 11 3.2 17.2 3.2 C23.5 3.2 26 8 24.8 16 C24.2 13 23.5 11.2 22.5 10.5 C19 11 15 11 12 10.5 C10.8 11.5 10 13 9.2 16 Z" fill="#2a2a2a"/>
<path d="M16.4 27.8 L18.2 27.8 L18.9 35 L15.7 35 Z" fill="#efb025"/></svg>
</div></div>
<div class="card" style="left:550px;top:255px;border-color:#333333">
<div class="ct"><div>GT.252</div><div>Web developing training to</div><div>Yusuf Khan</div></div>
<div class="cl"><div class="pg" style="width:60%"></div></div>
<div class="cf">
<svg class="ic" style="left:2.5px" width="11" height="11" viewBox="0 0 11 11"><rect x="0.75" y="0.75" width="9" height="9" rx="1.6" fill="none" stroke="#f0a93c" stroke-width="1.5"/><path d="M3.6 2.8 V6.5 H7" fill="none" stroke="#f0a93c" stroke-width="1.2"/></svg>
<div class="cn" style="left:14px">30h</div>
<svg class="ic" style="left:41.5px;top:21.5px" width="12" height="12" viewBox="0 0 12 12"><rect x="0.75" y="1.75" width="9" height="9" rx="1.6" fill="none" stroke="#3ba56a" stroke-width="1.5"/><path d="M3.6 3.8 V7.5 H7" fill="none" stroke="#3ba56a" stroke-width="1.2"/><circle cx="9.2" cy="2.3" r="2.1" fill="#1f9a55"/></svg>
<div class="cn" style="left:45px;width:40px;text-align:center">15h</div>
<svg class="ic" style="left:79.5px;top:21.5px" width="12" height="12" viewBox="0 0 12 12"><rect x="0.75" y="1.75" width="9" height="9" rx="1.6" fill="none" stroke="#e23b3b" stroke-width="1.5"/><path d="M3.6 3.8 V7.5 H7" fill="none" stroke="#e23b3b" stroke-width="1.2"/><circle cx="9.2" cy="2.3" r="2.1" fill="#e00000"/></svg>
<div class="cn" style="left:97px">..</div>
<svg class="av" width="35" height="35" viewBox="0 0 35 35"><circle cx="17.5" cy="17.5" r="17.5" fill="#c95c3f"/>
<path d="M4.2 29.2 C7 27 11 26 14 25.3 L17.3 28.2 L20.6 25.3 C24 26 28 27 30.8 29.2 A17.5 17.5 0 0 1 4.2 29.2 Z" fill="#f4f4f6"/>
<path d="M14 21 H20.5 V26 L17.3 28.4 L14 26 Z" fill="#e3ab80"/>
<ellipse cx="10.3" cy="18.5" rx="1.3" ry="2" fill="#e3ab80"/><ellipse cx="24.2" cy="18.5" rx="1.3" ry="2" fill="#e3ab80"/>
<path d="M10.8 12 C10.8 9 13 8.5 17.2 8.5 C21.5 8.5 23.6 9 23.6 12 C23.6 18 22.5 22 19.5 24 C18.3 24.8 16.2 24.8 15 24 C12 22 10.8 18 10.8 12 Z" fill="#ebb486"/>
<path d="M9.2 16 C8.6 9 11 3.2 17.2 3.2 C23.5 3.2 26 8 24.8 16 C24.2 13 23.5 11.2 22.5 10.5 C19 11 15 11 12 10.5 C10.8 11.5 10 13 9.2 16 Z" fill="#2a2a2a"/>
<path d="M16.4 27.8 L18.2 27.8 L18.9 35 L15.7 35 Z" fill="#efb025"/></svg>
</div></div>
<div class="card" style="left:550px;top:363px;border-color:#f5b914">
<div class="ct"><div>GT.251</div><div>Learn Mobile Development</div><div>using React Native</div></div>
<div class="cl"><div class="pg" style="width:30%"></div></div>
<div class="cf">
<svg class="ic" style="left:2.5px" width="11" height="11" viewBox="0 0 11 11"><rect x="0.75" y="0.75" width="9" height="9" rx="1.6" fill="none" stroke="#f0a93c" stroke-width="1.5"/><path d="M3.6 2.8 V6.5 H7" fill="none" stroke="#f0a93c" stroke-width="1.2"/></svg>
<div class="cn" style="left:14px">80h</div>
<svg class="ic" style="left:41.5px;top:21.5px" width="12" height="12" viewBox="0 0 12 12"><rect x="0.75" y="1.75" width="9" height="9" rx="1.6" fill="none" stroke="#3ba56a" stroke-width="1.5"/><path d="M3.6 3.8 V7.5 H7" fill="none" stroke="#3ba56a" stroke-width="1.2"/><circle cx="9.2" cy="2.3" r="2.1" fill="#1f9a55"/></svg>
<div class="cn" style="left:45px;width:40px;text-align:center">26h</div>
<svg class="ic" style="left:79.5px;top:21.5px" width="12" height="12" viewBox="0 0 12 12"><rect x="0.75" y="1.75" width="9" height="9" rx="1.6" fill="none" stroke="#e23b3b" stroke-width="1.5"/><path d="M3.6 3.8 V7.5 H7" fill="none" stroke="#e23b3b" stroke-width="1.2"/><circle cx="9.2" cy="2.3" r="2.1" fill="#e00000"/></svg>
<div class="cn" style="left:97px">..</div>
<svg class="av" width="35" height="35" viewBox="0 0 35 35"><circle cx="17.5" cy="17.5" r="17.5" fill="#c95c3f"/>
<path d="M4.2 29.2 C7 27 11 26 14 25.3 L17.3 28.2 L20.6 25.3 C24 26 28 27 30.8 29.2 A17.5 17.5 0 0 1 4.2 29.2 Z" fill="#f4f4f6"/>
<path d="M14 21 H20.5 V26 L17.3 28.4 L14 26 Z" fill="#e3ab80"/>
<ellipse cx="10.3" cy="18.5" rx="1.3" ry="2" fill="#e3ab80"/><ellipse cx="24.2" cy="18.5" rx="1.3" ry="2" fill="#e3ab80"/>
<path d="M10.8 12 C10.8 9 13 8.5 17.2 8.5 C21.5 8.5 23.6 9 23.6 12 C23.6 18 22.5 22 19.5 24 C18.3 24.8 16.2 24.8 15 24 C12 22 10.8 18 10.8 12 Z" fill="#ebb486"/>
<path d="M9.2 16 C8.6 9 11 3.2 17.2 3.2 C23.5 3.2 26 8 24.8 16 C24.2 13 23.5 11.2 22.5 10.5 C19 11 15 11 12 10.5 C10.8 11.5 10 13 9.2 16 Z" fill="#2a2a2a"/>
<path d="M16.4 27.8 L18.2 27.8 L18.9 35 L15.7 35 Z" fill="#efb025"/></svg>
</div></div>
<div class="card" style="left:550px;top:471px;border-color:#aec6ec">
<div class="ct"><div>GT.249</div><div>Placeholder</div></div>
<div class="cl"><div class="pg" style="width:50%"></div></div>
<div class="cf">
<svg class="ic" style="left:2.5px" width="11" height="11" viewBox="0 0 11 11"><rect x="0.75" y="0.75" width="9" height="9" rx="1.6" fill="none" stroke="#f0a93c" stroke-width="1.5"/><path d="M3.6 2.8 V6.5 H7" fill="none" stroke="#f0a93c" stroke-width="1.2"/></svg>
<div class="cn" style="left:14px">8h</div>
<svg class="ic" style="left:41.5px;top:21.5px" width="12" height="12" viewBox="0 0 12 12"><rect x="0.75" y="1.75" width="9" height="9" rx="1.6" fill="none" stroke="#3ba56a" stroke-width="1.5"/><path d="M3.6 3.8 V7.5 H7" fill="none" stroke="#3ba56a" stroke-width="1.2"/><circle cx="9.2" cy="2.3" r="2.1" fill="#1f9a55"/></svg>
<div class="cn" style="left:45px;width:40px;text-align:center">8h</div>
<svg class="ic" style="left:79.5px;top:21.5px" width="12" height="12" viewBox="0 0 12 12"><rect x="0.75" y="1.75" width="9" height="9" rx="1.6" fill="none" stroke="#e23b3b" stroke-width="1.5"/><path d="M3.6 3.8 V7.5 H7" fill="none" stroke="#e23b3b" stroke-width="1.2"/><circle cx="9.2" cy="2.3" r="2.1" fill="#e00000"/></svg>
<div class="cn" style="left:97px">..</div>
<svg class="av" width="35" height="35" viewBox="0 0 35 35"><circle cx="17.5" cy="17.5" r="17.5" fill="#c95c3f"/>
<path d="M4.2 29.2 C7 27 11 26 14 25.3 L17.3 28.2 L20.6 25.3 C24 26 28 27 30.8 29.2 A17.5 17.5 0 0 1 4.2 29.2 Z" fill="#f4f4f6"/>
<path d="M14 21 H20.5 V26 L17.3 28.4 L14 26 Z" fill="#e3ab80"/>
<ellipse cx="10.3" cy="18.5" rx="1.3" ry="2" fill="#e3ab80"/><ellipse cx="24.2" cy="18.5" rx="1.3" ry="2" fill="#e3ab80"/>
<path d="M10.8 12 C10.8 9 13 8.5 17.2 8.5 C21.5 8.5 23.6 9 23.6 12 C23.6 18 22.5 22 19.5 24 C18.3 24.8 16.2 24.8 15 24 C12 22 10.8 18 10.8 12 Z" fill="#ebb486"/>
<path d="M9.2 16 C8.6 9 11 3.2 17.2 3.2 C23.5 3.2 26 8 24.8 16 C24.2 13 23.5 11.2 22.5 10.5 C19 11 15 11 12 10.5 C10.8 11.5 10 13 9.2 16 Z" fill="#2a2a2a"/>
<path d="M16.4 27.8 L18.2 27.8 L18.9 35 L15.7 35 Z" fill="#efb025"/></svg>
</div></div>
<div class="card" style="left:728px;top:39px;border-color:#aec6ec">
<div class="ct"><div>GT.250</div><div>Laptop slowness issue</div></div>
<div class="cl"><div class="pg" style="width:100%"></div></div>
<div class="cf">
<svg class="ic" style="left:2.5px" width="11" height="11" viewBox="0 0 11 11"><rect x="0.75" y="0.75" width="9" height="9" rx="1.6" fill="none" stroke="#f0a93c" stroke-width="1.5"/><path d="M3.6 2.8 V6.5 H7" fill="none" stroke="#f0a93c" stroke-width="1.2"/></svg>
<div class="cn" style="left:14px">12h</div>
<svg class="ic" style="left:41.5px;top:21.5px" width="12" height="12" viewBox="0 0 12 12"><rect x="0.75" y="1.75" width="9" height="9" rx="1.6" fill="none" stroke="#3ba56a" stroke-width="1.5"/><path d="M3.6 3.8 V7.5 H7" fill="none" stroke="#3ba56a" stroke-width="1.2"/><circle cx="9.2" cy="2.3" r="2.1" fill="#1f9a55"/></svg>
<div class="cn" style="left:45px;width:40px;text-align:center">12h</div>
<svg class="ic" style="left:79.5px;top:21.5px" width="12" height="12" viewBox="0 0 12 12"><rect x="0.75" y="1.75" width="9" height="9" rx="1.6" fill="none" stroke="#e23b3b" stroke-width="1.5"/><path d="M3.6 3.8 V7.5 H7" fill="none" stroke="#e23b3b" stroke-width="1.2"/><circle cx="9.2" cy="2.3" r="2.1" fill="#e00000"/></svg>
<div class="cn" style="left:97px">..</div>
<svg class="av" width="35" height="35" viewBox="0 0 35 35"><circle cx="17.5" cy="17.5" r="17.5" fill="#c95c3f"/>
<path d="M4.2 29.2 C7 27 11 26 14 25.3 L17.3 28.2 L20.6 25.3 C24 26 28 27 30.8 29.2 A17.5 17.5 0 0 1 4.2 29.2 Z" fill="#f4f4f6"/>
<path d="M14 21 H20.5 V26 L17.3 28.4 L14 26 Z" fill="#e3ab80"/>
<ellipse cx="10.3" cy="18.5" rx="1.3" ry="2" fill="#e3ab80"/><ellipse cx="24.2" cy="18.5" rx="1.3" ry="2" fill="#e3ab80"/>
<path d="M10.8 12 C10.8 9 13 8.5 17.2 8.5 C21.5 8.5 23.6 9 23.6 12 C23.6 18 22.5 22 19.5 24 C18.3 24.8 16.2 24.8 15 24 C12 22 10.8 18 10.8 12 Z" fill="#ebb486"/>
<path d="M9.2 16 C8.6 9 11 3.2 17.2 3.2 C23.5 3.2 26 8 24.8 16 C24.2 13 23.5 11.2 22.5 10.5 C19 11 15 11 12 10.5 C10.8 11.5 10 13 9.2 16 Z" fill="#2a2a2a"/>
<path d="M16.4 27.8 L18.2 27.8 L18.9 35 L15.7 35 Z" fill="#efb025"/></svg>
</div></div>
<div class="card" style="left:728px;top:147px;border-color:#aec6ec">
<div class="ct"><div>GT.248</div><div>Laptop OS issue fixing and</div><div>recovering old files</div></div>
<div class="cl"><div class="pg" style="width:100%"></div></div>
<div class="cf">
<svg class="ic" style="left:2.5px" width="11" height="11" viewBox="0 0 11 11"><rect x="0.75" y="0.75" width="9" height="9" rx="1.6" fill="none" stroke="#f0a93c" stroke-width="1.5"/><path d="M3.6 2.8 V6.5 H7" fill="none" stroke="#f0a93c" stroke-width="1.2"/></svg>
<div class="cn" style="left:14px">16h</div>
<svg class="ic" style="left:41.5px;top:21.5px" width="12" height="12" viewBox="0 0 12 12"><rect x="0.75" y="1.75" width="9" height="9" rx="1.6" fill="none" stroke="#3ba56a" stroke-width="1.5"/><path d="M3.6 3.8 V7.5 H7" fill="none" stroke="#3ba56a" stroke-width="1.2"/><circle cx="9.2" cy="2.3" r="2.1" fill="#1f9a55"/></svg>
<div class="cn" style="left:45px;width:40px;text-align:center">16h</div>
<svg class="ic" style="left:79.5px;top:21.5px" width="12" height="12" viewBox="0 0 12 12"><rect x="0.75" y="1.75" width="9" height="9" rx="1.6" fill="none" stroke="#e23b3b" stroke-width="1.5"/><path d="M3.6 3.8 V7.5 H7" fill="none" stroke="#e23b3b" stroke-width="1.2"/><circle cx="9.2" cy="2.3" r="2.1" fill="#e00000"/></svg>
<div class="cn" style="left:97px">..</div>
<svg class="av" width="35" height="35" viewBox="0 0 35 35"><circle cx="17.5" cy="17.5" r="17.5" fill="#c95c3f"/>
<path d="M4.2 29.2 C7 27 11 26 14 25.3 L17.3 28.2 L20.6 25.3 C24 26 28 27 30.8 29.2 A17.5 17.5 0 0 1 4.2 29.2 Z" fill="#f4f4f6"/>
<path d="M14 21 H20.5 V26 L17.3 28.4 L14 26 Z" fill="#e3ab80"/>
<ellipse cx="10.3" cy="18.5" rx="1.3" ry="2" fill="#e3ab80"/><ellipse cx="24.2" cy="18.5" rx="1.3" ry="2" fill="#e3ab80"/>
<path d="M10.8 12 C10.8 9 13 8.5 17.2 8.5 C21.5 8.5 23.6 9 23.6 12 C23.6 18 22.5 22 19.5 24 C18.3 24.8 16.2 24.8 15 24 C12 22 10.8 18 10.8 12 Z" fill="#ebb486"/>
<path d="M9.2 16 C8.6 9 11 3.2 17.2 3.2 C23.5 3.2 26 8 24.8 16 C24.2 13 23.5 11.2 22.5 10.5 C19 11 15 11 12 10.5 C10.8 11.5 10 13 9.2 16 Z" fill="#2a2a2a"/>
<path d="M16.4 27.8 L18.2 27.8 L18.9 35 L15.7 35 Z" fill="#efb025"/></svg>
</div></div>
<div class="card" style="left:728px;top:255px;border-color:#aec6ec">
<div class="ct"><div>GT.247</div><div>Ess Mobile Application -</div><div>Permission Request</div></div>
<div class="cl"><div class="pg" style="width:100%"></div></div>
<div class="cf">
<svg class="ic" style="left:2.5px" width="11" height="11" viewBox="0 0 11 11"><rect x="0.75" y="0.75" width="9" height="9" rx="1.6" fill="none" stroke="#f0a93c" stroke-width="1.5"/><path d="M3.6 2.8 V6.5 H7" fill="none" stroke="#f0a93c" stroke-width="1.2"/></svg>
<div class="cn" style="left:14px">40h</div>
<svg class="ic" style="left:41.5px;top:21.5px" width="12" height="12" viewBox="0 0 12 12"><rect x="0.75" y="1.75" width="9" height="9" rx="1.6" fill="none" stroke="#3ba56a" stroke-width="1.5"/><path d="M3.6 3.8 V7.5 H7" fill="none" stroke="#3ba56a" stroke-width="1.2"/><circle cx="9.2" cy="2.3" r="2.1" fill="#1f9a55"/></svg>
<div class="cn" style="left:45px;width:40px;text-align:center">40h</div>
<svg class="ic" style="left:79.5px;top:21.5px" width="12" height="12" viewBox="0 0 12 12"><rect x="0.75" y="1.75" width="9" height="9" rx="1.6" fill="none" stroke="#e23b3b" stroke-width="1.5"/><path d="M3.6 3.8 V7.5 H7" fill="none" stroke="#e23b3b" stroke-width="1.2"/><circle cx="9.2" cy="2.3" r="2.1" fill="#e00000"/></svg>
<div class="cn" style="left:97px">..</div>
<svg class="av" width="35" height="35" viewBox="0 0 35 35"><circle cx="17.5" cy="17.5" r="17.5" fill="#c95c3f"/>
<path d="M4.2 29.2 C7 27 11 26 14 25.3 L17.3 28.2 L20.6 25.3 C24 26 28 27 30.8 29.2 A17.5 17.5 0 0 1 4.2 29.2 Z" fill="#f4f4f6"/>
<path d="M14 21 H20.5 V26 L17.3 28.4 L14 26 Z" fill="#e3ab80"/>
<ellipse cx="10.3" cy="18.5" rx="1.3" ry="2" fill="#e3ab80"/><ellipse cx="24.2" cy="18.5" rx="1.3" ry="2" fill="#e3ab80"/>
<path d="M10.8 12 C10.8 9 13 8.5 17.2 8.5 C21.5 8.5 23.6 9 23.6 12 C23.6 18 22.5 22 19.5 24 C18.3 24.8 16.2 24.8 15 24 C12 22 10.8 18 10.8 12 Z" fill="#ebb486"/>
<path d="M9.2 16 C8.6 9 11 3.2 17.2 3.2 C23.5 3.2 26 8 24.8 16 C24.2 13 23.5 11.2 22.5 10.5 C19 11 15 11 12 10.5 C10.8 11.5 10 13 9.2 16 Z" fill="#2a2a2a"/>
<path d="M16.4 27.8 L18.2 27.8 L18.9 35 L15.7 35 Z" fill="#efb025"/></svg>
</div></div>
<div class="card" style="left:728px;top:363px;border-color:#aec6ec">
<div class="ct"><div>GT.246</div><div>Ess Mobile Application -</div><div>WFH Request</div></div>
<div class="cl"><div class="pg" style="width:100%"></div></div>
<div class="cf">
<svg class="ic" style="left:2.5px" width="11" height="11" viewBox="0 0 11 11"><rect x="0.75" y="0.75" width="9" height="9" rx="1.6" fill="none" stroke="#f0a93c" stroke-width="1.5"/><path d="M3.6 2.8 V6.5 H7" fill="none" stroke="#f0a93c" stroke-width="1.2"/></svg>
<div class="cn" style="left:14px">40h</div>
<svg class="ic" style="left:41.5px;top:21.5px" width="12" height="12" viewBox="0 0 12 12"><rect x="0.75" y="1.75" width="9" height="9" rx="1.6" fill="none" stroke="#3ba56a" stroke-width="1.5"/><path d="M3.6 3.8 V7.5 H7" fill="none" stroke="#3ba56a" stroke-width="1.2"/><circle cx="9.2" cy="2.3" r="2.1" fill="#1f9a55"/></svg>
<div class="cn" style="left:45px;width:40px;text-align:center">40h</div>
<svg class="ic" style="left:79.5px;top:21.5px" width="12" height="12" viewBox="0 0 12 12"><rect x="0.75" y="1.75" width="9" height="9" rx="1.6" fill="none" stroke="#e23b3b" stroke-width="1.5"/><path d="M3.6 3.8 V7.5 H7" fill="none" stroke="#e23b3b" stroke-width="1.2"/><circle cx="9.2" cy="2.3" r="2.1" fill="#e00000"/></svg>
<div class="cn" style="left:97px">..</div>
<svg class="av" width="35" height="35" viewBox="0 0 35 35"><circle cx="17.5" cy="17.5" r="17.5" fill="#c95c3f"/>
<path d="M4.2 29.2 C7 27 11 26 14 25.3 L17.3 28.2 L20.6 25.3 C24 26 28 27 30.8 29.2 A17.5 17.5 0 0 1 4.2 29.2 Z" fill="#f4f4f6"/>
<path d="M14 21 H20.5 V26 L17.3 28.4 L14 26 Z" fill="#e3ab80"/>
<ellipse cx="10.3" cy="18.5" rx="1.3" ry="2" fill="#e3ab80"/><ellipse cx="24.2" cy="18.5" rx="1.3" ry="2" fill="#e3ab80"/>
<path d="M10.8 12 C10.8 9 13 8.5 17.2 8.5 C21.5 8.5 23.6 9 23.6 12 C23.6 18 22.5 22 19.5 24 C18.3 24.8 16.2 24.8 15 24 C12 22 10.8 18 10.8 12 Z" fill="#ebb486"/>
<path d="M9.2 16 C8.6 9 11 3.2 17.2 3.2 C23.5 3.2 26 8 24.8 16 C24.2 13 23.5 11.2 22.5 10.5 C19 11 15 11 12 10.5 C10.8 11.5 10 13 9.2 16 Z" fill="#2a2a2a"/>
<path d="M16.4 27.8 L18.2 27.8 L18.9 35 L15.7 35 Z" fill="#efb025"/></svg>
</div></div>
<div class="card" style="left:728px;top:471px;border-color:#aec6ec">
<div class="ct"><div>GT.245</div><div>Placeholder</div></div>
<div class="cl"><div class="pg" style="width:100%"></div></div>
<div class="cf">
<svg class="ic" style="left:2.5px" width="11" height="11" viewBox="0 0 11 11"><rect x="0.75" y="0.75" width="9" height="9" rx="1.6" fill="none" stroke="#f0a93c" stroke-width="1.5"/><path d="M3.6 2.8 V6.5 H7" fill="none" stroke="#f0a93c" stroke-width="1.2"/></svg>
<div class="cn" style="left:14px">8h</div>
<svg class="ic" style="left:41.5px;top:21.5px" width="12" height="12" viewBox="0 0 12 12"><rect x="0.75" y="1.75" width="9" height="9" rx="1.6" fill="none" stroke="#3ba56a" stroke-width="1.5"/><path d="M3.6 3.8 V7.5 H7" fill="none" stroke="#3ba56a" stroke-width="1.2"/><circle cx="9.2" cy="2.3" r="2.1" fill="#1f9a55"/></svg>
<div class="cn" style="left:45px;width:40px;text-align:center">8h</div>
<svg class="ic" style="left:79.5px;top:21.5px" width="12" height="12" viewBox="0 0 12 12"><rect x="0.75" y="1.75" width="9" height="9" rx="1.6" fill="none" stroke="#e23b3b" stroke-width="1.5"/><path d="M3.6 3.8 V7.5 H7" fill="none" stroke="#e23b3b" stroke-width="1.2"/><circle cx="9.2" cy="2.3" r="2.1" fill="#e00000"/></svg>
<div class="cn" style="left:97px">..</div>
<svg class="av" width="35" height="35" viewBox="0 0 35 35"><circle cx="17.5" cy="17.5" r="17.5" fill="#c95c3f"/>
<path d="M4.2 29.2 C7 27 11 26 14 25.3 L17.3 28.2 L20.6 25.3 C24 26 28 27 30.8 29.2 A17.5 17.5 0 0 1 4.2 29.2 Z" fill="#f4f4f6"/>
<path d="M14 21 H20.5 V26 L17.3 28.4 L14 26 Z" fill="#e3ab80"/>
<ellipse cx="10.3" cy="18.5" rx="1.3" ry="2" fill="#e3ab80"/><ellipse cx="24.2" cy="18.5" rx="1.3" ry="2" fill="#e3ab80"/>
<path d="M10.8 12 C10.8 9 13 8.5 17.2 8.5 C21.5 8.5 23.6 9 23.6 12 C23.6 18 22.5 22 19.5 24 C18.3 24.8 16.2 24.8 15 24 C12 22 10.8 18 10.8 12 Z" fill="#ebb486"/>
<path d="M9.2 16 C8.6 9 11 3.2 17.2 3.2 C23.5 3.2 26 8 24.8 16 C24.2 13 23.5 11.2 22.5 10.5 C19 11 15 11 12 10.5 C10.8 11.5 10 13 9.2 16 Z" fill="#2a2a2a"/>
<path d="M16.4 27.8 L18.2 27.8 L18.9 35 L15.7 35 Z" fill="#efb025"/></svg>
</div></div>
<div class="card" style="left:1014px;top:39px;border-color:#aec6ec">
<div class="ct"><div>GT.177</div><div>Create a User and Employee</div><div>Controller for login</div></div>
<div class="cl"><div class="pg" style="width:100%"></div></div>
<div class="cf">
<svg class="ic" style="left:2.5px" width="11" height="11" viewBox="0 0 11 11"><rect x="0.75" y="0.75" width="9" height="9" rx="1.6" fill="none" stroke="#f0a93c" stroke-width="1.5"/><path d="M3.6 2.8 V6.5 H7" fill="none" stroke="#f0a93c" stroke-width="1.2"/></svg>
<div class="cn" style="left:14px">8h</div>
<svg class="ic" style="left:41.5px;top:21.5px" width="12" height="12" viewBox="0 0 12 12"><rect x="0.75" y="1.75" width="9" height="9" rx="1.6" fill="none" stroke="#3ba56a" stroke-width="1.5"/><path d="M3.6 3.8 V7.5 H7" fill="none" stroke="#3ba56a" stroke-width="1.2"/><circle cx="9.2" cy="2.3" r="2.1" fill="#1f9a55"/></svg>
<div class="cn" style="left:45px;width:40px;text-align:center">9h</div>
<svg class="ic" style="left:79.5px;top:21.5px" width="12" height="12" viewBox="0 0 12 12"><rect x="0.75" y="1.75" width="9" height="9" rx="1.6" fill="none" stroke="#e23b3b" stroke-width="1.5"/><path d="M3.6 3.8 V7.5 H7" fill="none" stroke="#e23b3b" stroke-width="1.2"/><circle cx="9.2" cy="2.3" r="2.1" fill="#e00000"/></svg>
<div class="cn" style="left:97px">..</div>
<svg class="av" width="35" height="35" viewBox="0 0 35 35"><circle cx="17.5" cy="17.5" r="17.5" fill="#c95c3f"/>
<path d="M4.2 29.2 C7 27 11 26 14 25.3 L17.3 28.2 L20.6 25.3 C24 26 28 27 30.8 29.2 A17.5 17.5 0 0 1 4.2 29.2 Z" fill="#f4f4f6"/>
<path d="M14 21 H20.5 V26 L17.3 28.4 L14 26 Z" fill="#e3ab80"/>
<ellipse cx="10.3" cy="18.5" rx="1.3" ry="2" fill="#e3ab80"/><ellipse cx="24.2" cy="18.5" rx="1.3" ry="2" fill="#e3ab80"/>
<path d="M10.8 12 C10.8 9 13 8.5 17.2 8.5 C21.5 8.5 23.6 9 23.6 12 C23.6 18 22.5 22 19.5 24 C18.3 24.8 16.2 24.8 15 24 C12 22 10.8 18 10.8 12 Z" fill="#ebb486"/>
<path d="M9.2 16 C8.6 9 11 3.2 17.2 3.2 C23.5 3.2 26 8 24.8 16 C24.2 13 23.5 11.2 22.5 10.5 C19 11 15 11 12 10.5 C10.8 11.5 10 13 9.2 16 Z" fill="#2a2a2a"/>
<path d="M16.4 27.8 L18.2 27.8 L18.9 35 L15.7 35 Z" fill="#efb025"/></svg>
</div></div>
<div class="card" style="left:1014px;top:147px;border-color:#aec6ec">
<div class="ct"><div>GT.176</div><div>Create a Order Controller</div></div>
<div class="cl"><div class="pg" style="width:100%"></div></div>
<div class="cf">
<svg class="ic" style="left:2.5px" width="11" height="11" viewBox="0 0 11 11"><rect x="0.75" y="0.75" width="9" height="9" rx="1.6" fill="none" stroke="#f0a93c" stroke-width="1.5"/><path d="M3.6 2.8 V6.5 H7" fill="none" stroke="#f0a93c" stroke-width="1.2"/></svg>
<div class="cn" style="left:14px">8h</div>
<svg class="ic" style="left:41.5px;top:21.5px" width="12" height="12" viewBox="0 0 12 12"><rect x="0.75" y="1.75" width="9" height="9" rx="1.6" fill="none" stroke="#3ba56a" stroke-width="1.5"/><path d="M3.6 3.8 V7.5 H7" fill="none" stroke="#3ba56a" stroke-width="1.2"/><circle cx="9.2" cy="2.3" r="2.1" fill="#1f9a55"/></svg>
<div class="cn" style="left:45px;width:40px;text-align:center">9h</div>
<svg class="ic" style="left:79.5px;top:21.5px" width="12" height="12" viewBox="0 0 12 12"><rect x="0.75" y="1.75" width="9" height="9" rx="1.6" fill="none" stroke="#e23b3b" stroke-width="1.5"/><path d="M3.6 3.8 V7.5 H7" fill="none" stroke="#e23b3b" stroke-width="1.2"/><circle cx="9.2" cy="2.3" r="2.1" fill="#e00000"/></svg>
<div class="cn" style="left:97px">..</div>
<svg class="av" width="35" height="35" viewBox="0 0 35 35"><circle cx="17.5" cy="17.5" r="17.5" fill="#c95c3f"/>
<path d="M4.2 29.2 C7 27 11 26 14 25.3 L17.3 28.2 L20.6 25.3 C24 26 28 27 30.8 29.2 A17.5 17.5 0 0 1 4.2 29.2 Z" fill="#f4f4f6"/>
<path d="M14 21 H20.5 V26 L17.3 28.4 L14 26 Z" fill="#e3ab80"/>
<ellipse cx="10.3" cy="18.5" rx="1.3" ry="2" fill="#e3ab80"/><ellipse cx="24.2" cy="18.5" rx="1.3" ry="2" fill="#e3ab80"/>
<path d="M10.8 12 C10.8 9 13 8.5 17.2 8.5 C21.5 8.5 23.6 9 23.6 12 C23.6 18 22.5 22 19.5 24 C18.3 24.8 16.2 24.8 15 24 C12 22 10.8 18 10.8 12 Z" fill="#ebb486"/>
<path d="M9.2 16 C8.6 9 11 3.2 17.2 3.2 C23.5 3.2 26 8 24.8 16 C24.2 13 23.5 11.2 22.5 10.5 C19 11 15 11 12 10.5 C10.8 11.5 10 13 9.2 16 Z" fill="#2a2a2a"/>
<path d="M16.4 27.8 L18.2 27.8 L18.9 35 L15.7 35 Z" fill="#efb025"/></svg>
</div></div>
<div class="card" style="left:1322px;top:39px;border-color:#aec6ec">
<div class="ct"><div>GT.209</div><div>Bilingual Support</div></div>
<div class="cl"><div class="pg" style="width:100%"></div></div>
<div class="cf">
<svg class="ic" style="left:2.5px" width="11" height="11" viewBox="0 0 11 11"><rect x="0.75" y="0.75" width="9" height="9" rx="1.6" fill="none" stroke="#f0a93c" stroke-width="1.5"/><path d="M3.6 2.8 V6.5 H7" fill="none" stroke="#f0a93c" stroke-width="1.2"/></svg>
<div class="cn" style="left:14px">22h</div>
<svg class="ic" style="left:41.5px;top:21.5px" width="12" height="12" viewBox="0 0 12 12"><rect x="0.75" y="1.75" width="9" height="9" rx="1.6" fill="none" stroke="#3ba56a" stroke-width="1.5"/><path d="M3.6 3.8 V7.5 H7" fill="none" stroke="#3ba56a" stroke-width="1.2"/><circle cx="9.2" cy="2.3" r="2.1" fill="#1f9a55"/></svg>
<div class="cn" style="left:45px;width:40px;text-align:center">20h</div>
<svg class="ic" style="left:79.5px;top:21.5px" width="12" height="12" viewBox="0 0 12 12"><rect x="0.75" y="1.75" width="9" height="9" rx="1.6" fill="none" stroke="#e23b3b" stroke-width="1.5"/><path d="M3.6 3.8 V7.5 H7" fill="none" stroke="#e23b3b" stroke-width="1.2"/><circle cx="9.2" cy="2.3" r="2.1" fill="#e00000"/></svg>
<div class="cn" style="left:97px">..</div>
<svg class="av" width="35" height="35" viewBox="0 0 35 35"><circle cx="17.5" cy="17.5" r="17.5" fill="#c95c3f"/>
<path d="M4.2 29.2 C7 27 11 26 14 25.3 L17.3 28.2 L20.6 25.3 C24 26 28 27 30.8 29.2 A17.5 17.5 0 0 1 4.2 29.2 Z" fill="#f4f4f6"/>
<path d="M14 21 H20.5 V26 L17.3 28.4 L14 26 Z" fill="#e3ab80"/>
<ellipse cx="10.3" cy="18.5" rx="1.3" ry="2" fill="#e3ab80"/><ellipse cx="24.2" cy="18.5" rx="1.3" ry="2" fill="#e3ab80"/>
<path d="M10.8 12 C10.8 9 13 8.5 17.2 8.5 C21.5 8.5 23.6 9 23.6 12 C23.6 18 22.5 22 19.5 24 C18.3 24.8 16.2 24.8 15 24 C12 22 10.8 18 10.8 12 Z" fill="#ebb486"/>
<path d="M9.2 16 C8.6 9 11 3.2 17.2 3.2 C23.5 3.2 26 8 24.8 16 C24.2 13 23.5 11.2 22.5 10.5 C19 11 15 11 12 10.5 C10.8 11.5 10 13 9.2 16 Z" fill="#2a2a2a"/>
<path d="M16.4 27.8 L18.2 27.8 L18.9 35 L15.7 35 Z" fill="#efb025"/></svg>
</div></div>
<div class="card" style="left:1322px;top:147px;border-color:#aec6ec">
<div class="ct"><div>GT.208</div><div>Dashboard Design</div></div>
<div class="cl"><div class="pg" style="width:100%"></div></div>
<div class="cf">
<svg class="ic" style="left:2.5px" width="11" height="11" viewBox="0 0 11 11"><rect x="0.75" y="0.75" width="9" height="9" rx="1.6" fill="none" stroke="#f0a93c" stroke-width="1.5"/><path d="M3.6 2.8 V6.5 H7" fill="none" stroke="#f0a93c" stroke-width="1.2"/></svg>
<div class="cn" style="left:14px">28h</div>
<svg class="ic" style="left:41.5px;top:21.5px" width="12" height="12" viewBox="0 0 12 12"><rect x="0.75" y="1.75" width="9" height="9" rx="1.6" fill="none" stroke="#3ba56a" stroke-width="1.5"/><path d="M3.6 3.8 V7.5 H7" fill="none" stroke="#3ba56a" stroke-width="1.2"/><circle cx="9.2" cy="2.3" r="2.1" fill="#1f9a55"/></svg>
<div class="cn" style="left:45px;width:40px;text-align:center">20h</div>
<svg class="ic" style="left:79.5px;top:21.5px" width="12" height="12" viewBox="0 0 12 12"><rect x="0.75" y="1.75" width="9" height="9" rx="1.6" fill="none" stroke="#e23b3b" stroke-width="1.5"/><path d="M3.6 3.8 V7.5 H7" fill="none" stroke="#e23b3b" stroke-width="1.2"/><circle cx="9.2" cy="2.3" r="2.1" fill="#e00000"/></svg>
<div class="cn" style="left:97px">..</div>
<svg class="av" width="35" height="35" viewBox="0 0 35 35"><circle cx="17.5" cy="17.5" r="17.5" fill="#c95c3f"/>
<path d="M4.2 29.2 C7 27 11 26 14 25.3 L17.3 28.2 L20.6 25.3 C24 26 28 27 30.8 29.2 A17.5 17.5 0 0 1 4.2 29.2 Z" fill="#f4f4f6"/>
<path d="M14 21 H20.5 V26 L17.3 28.4 L14 26 Z" fill="#e3ab80"/>
<ellipse cx="10.3" cy="18.5" rx="1.3" ry="2" fill="#e3ab80"/><ellipse cx="24.2" cy="18.5" rx="1.3" ry="2" fill="#e3ab80"/>
<path d="M10.8 12 C10.8 9 13 8.5 17.2 8.5 C21.5 8.5 23.6 9 23.6 12 C23.6 18 22.5 22 19.5 24 C18.3 24.8 16.2 24.8 15 24 C12 22 10.8 18 10.8 12 Z" fill="#ebb486"/>
<path d="M9.2 16 C8.6 9 11 3.2 17.2 3.2 C23.5 3.2 26 8 24.8 16 C24.2 13 23.5 11.2 22.5 10.5 C19 11 15 11 12 10.5 C10.8 11.5 10 13 9.2 16 Z" fill="#2a2a2a"/>
<path d="M16.4 27.8 L18.2 27.8 L18.9 35 L15.7 35 Z" fill="#efb025"/></svg>
</div></div>
<div class="card" style="left:1322px;top:255px;border-color:#aec6ec">
<div class="ct"><div>GT.220</div><div>Integration with</div><div>EWaiter App</div></div>
<div class="cl"><div class="pg" style="width:100%"></div></div>
<div class="cf">
<svg class="ic" style="left:2.5px" width="11" height="11" viewBox="0 0 11 11"><rect x="0.75" y="0.75" width="9" height="9" rx="1.6" fill="none" stroke="#f0a93c" stroke-width="1.5"/><path d="M3.6 2.8 V6.5 H7" fill="none" stroke="#f0a93c" stroke-width="1.2"/></svg>
<div class="cn" style="left:14px">8h</div>
<svg class="ic" style="left:41.5px;top:21.5px" width="12" height="12" viewBox="0 0 12 12"><rect x="0.75" y="1.75" width="9" height="9" rx="1.6" fill="none" stroke="#3ba56a" stroke-width="1.5"/><path d="M3.6 3.8 V7.5 H7" fill="none" stroke="#3ba56a" stroke-width="1.2"/><circle cx="9.2" cy="2.3" r="2.1" fill="#1f9a55"/></svg>
<div class="cn" style="left:45px;width:40px;text-align:center">8h</div>
<svg class="ic" style="left:79.5px;top:21.5px" width="12" height="12" viewBox="0 0 12 12"><rect x="0.75" y="1.75" width="9" height="9" rx="1.6" fill="none" stroke="#e23b3b" stroke-width="1.5"/><path d="M3.6 3.8 V7.5 H7" fill="none" stroke="#e23b3b" stroke-width="1.2"/><circle cx="9.2" cy="2.3" r="2.1" fill="#e00000"/></svg>
<div class="cn" style="left:97px">..</div>
<svg class="av" width="35" height="35" viewBox="0 0 35 35"><circle cx="17.5" cy="17.5" r="17.5" fill="#c95c3f"/>
<path d="M4.2 29.2 C7 27 11 26 14 25.3 L17.3 28.2 L20.6 25.3 C24 26 28 27 30.8 29.2 A17.5 17.5 0 0 1 4.2 29.2 Z" fill="#f4f4f6"/>
<path d="M14 21 H20.5 V26 L17.3 28.4 L14 26 Z" fill="#e3ab80"/>
<ellipse cx="10.3" cy="18.5" rx="1.3" ry="2" fill="#e3ab80"/><ellipse cx="24.2" cy="18.5" rx="1.3" ry="2" fill="#e3ab80"/>
<path d="M10.8 12 C10.8 9 13 8.5 17.2 8.5 C21.5 8.5 23.6 9 23.6 12 C23.6 18 22.5 22 19.5 24 C18.3 24.8 16.2 24.8 15 24 C12 22 10.8 18 10.8 12 Z" fill="#ebb486"/>
<path d="M9.2 16 C8.6 9 11 3.2 17.2 3.2 C23.5 3.2 26 8 24.8 16 C24.2 13 23.5 11.2 22.5 10.5 C19 11 15 11 12 10.5 C10.8 11.5 10 13 9.2 16 Z" fill="#2a2a2a"/>
<path d="M16.4 27.8 L18.2 27.8 L18.9 35 L15.7 35 Z" fill="#efb025"/></svg>
</div></div>
<div class="card" style="left:1322px;top:363px;border-color:#aec6ec">
<div class="ct"><div>GT.217</div><div>Create Menu</div></div>
<div class="cl"><div class="pg" style="width:100%"></div></div>
<div class="cf">
<svg class="ic" style="left:2.5px" width="11" height="11" viewBox="0 0 11 11"><rect x="0.75" y="0.75" width="9" height="9" rx="1.6" fill="none" stroke="#f0a93c" stroke-width="1.5"/><path d="M3.6 2.8 V6.5 H7" fill="none" stroke="#f0a93c" stroke-width="1.2"/></svg>
<div class="cn" style="left:14px">6h</div>
<svg class="ic" style="left:41.5px;top:21.5px" width="12" height="12" viewBox="0 0 12 12"><rect x="0.75" y="1.75" width="9" height="9" rx="1.6" fill="none" stroke="#3ba56a" stroke-width="1.5"/><path d="M3.6 3.8 V7.5 H7" fill="none" stroke="#3ba56a" stroke-width="1.2"/><circle cx="9.2" cy="2.3" r="2.1" fill="#1f9a55"/></svg>
<div class="cn" style="left:45px;width:40px;text-align:center">6h</div>
<svg class="ic" style="left:79.5px;top:21.5px" width="12" height="12" viewBox="0 0 12 12"><rect x="0.75" y="1.75" width="9" height="9" rx="1.6" fill="none" stroke="#e23b3b" stroke-width="1.5"/><path d="M3.6 3.8 V7.5 H7" fill="none" stroke="#e23b3b" stroke-width="1.2"/><circle cx="9.2" cy="2.3" r="2.1" fill="#e00000"/></svg>
<div class="cn" style="left:97px">..</div>
<svg class="av" width="35" height="35" viewBox="0 0 35 35"><circle cx="17.5" cy="17.5" r="17.5" fill="#c95c3f"/>
<path d="M4.2 29.2 C7 27 11 26 14 25.3 L17.3 28.2 L20.6 25.3 C24 26 28 27 30.8 29.2 A17.5 17.5 0 0 1 4.2 29.2 Z" fill="#f4f4f6"/>
<path d="M14 21 H20.5 V26 L17.3 28.4 L14 26 Z" fill="#e3ab80"/>
<ellipse cx="10.3" cy="18.5" rx="1.3" ry="2" fill="#e3ab80"/><ellipse cx="24.2" cy="18.5" rx="1.3" ry="2" fill="#e3ab80"/>
<path d="M10.8 12 C10.8 9 13 8.5 17.2 8.5 C21.5 8.5 23.6 9 23.6 12 C23.6 18 22.5 22 19.5 24 C18.3 24.8 16.2 24.8 15 24 C12 22 10.8 18 10.8 12 Z" fill="#ebb486"/>
<path d="M9.2 16 C8.6 9 11 3.2 17.2 3.2 C23.5 3.2 26 8 24.8 16 C24.2 13 23.5 11.2 22.5 10.5 C19 11 15 11 12 10.5 C10.8 11.5 10 13 9.2 16 Z" fill="#2a2a2a"/>
<path d="M16.4 27.8 L18.2 27.8 L18.9 35 L15.7 35 Z" fill="#efb025"/></svg>
</div></div>
<div class="card" style="left:1322px;top:471px;border-color:#aec6ec">
<div class="ct"><div>GT.207</div><div>Placeholder</div></div>
<div class="cl"><div class="pg" style="width:100%"></div></div>
<div class="cf">
<svg class="ic" style="left:2.5px" width="11" height="11" viewBox="0 0 11 11"><rect x="0.75" y="0.75" width="9" height="9" rx="1.6" fill="none" stroke="#f0a93c" stroke-width="1.5"/><path d="M3.6 2.8 V6.5 H7" fill="none" stroke="#f0a93c" stroke-width="1.2"/></svg>
<div class="cn" style="left:14px">6h</div>
<svg class="ic" style="left:41.5px;top:21.5px" width="12" height="12" viewBox="0 0 12 12"><rect x="0.75" y="1.75" width="9" height="9" rx="1.6" fill="none" stroke="#3ba56a" stroke-width="1.5"/><path d="M3.6 3.8 V7.5 H7" fill="none" stroke="#3ba56a" stroke-width="1.2"/><circle cx="9.2" cy="2.3" r="2.1" fill="#1f9a55"/></svg>
<div class="cn" style="left:45px;width:40px;text-align:center">6h</div>
<svg class="ic" style="left:79.5px;top:21.5px" width="12" height="12" viewBox="0 0 12 12"><rect x="0.75" y="1.75" width="9" height="9" rx="1.6" fill="none" stroke="#e23b3b" stroke-width="1.5"/><path d="M3.6 3.8 V7.5 H7" fill="none" stroke="#e23b3b" stroke-width="1.2"/><circle cx="9.2" cy="2.3" r="2.1" fill="#e00000"/></svg>
<div class="cn" style="left:97px">..</div>
<svg class="av" width="35" height="35" viewBox="0 0 35 35"><circle cx="17.5" cy="17.5" r="17.5" fill="#c95c3f"/>
<path d="M4.2 29.2 C7 27 11 26 14 25.3 L17.3 28.2 L20.6 25.3 C24 26 28 27 30.8 29.2 A17.5 17.5 0 0 1 4.2 29.2 Z" fill="#f4f4f6"/>
<path d="M14 21 H20.5 V26 L17.3 28.4 L14 26 Z" fill="#e3ab80"/>
<ellipse cx="10.3" cy="18.5" rx="1.3" ry="2" fill="#e3ab80"/><ellipse cx="24.2" cy="18.5" rx="1.3" ry="2" fill="#e3ab80"/>
<path d="M10.8 12 C10.8 9 13 8.5 17.2 8.5 C21.5 8.5 23.6 9 23.6 12 C23.6 18 22.5 22 19.5 24 C18.3 24.8 16.2 24.8 15 24 C12 22 10.8 18 10.8 12 Z" fill="#ebb486"/>
<path d="M9.2 16 C8.6 9 11 3.2 17.2 3.2 C23.5 3.2 26 8 24.8 16 C24.2 13 23.5 11.2 22.5 10.5 C19 11 15 11 12 10.5 C10.8 11.5 10 13 9.2 16 Z" fill="#2a2a2a"/>
<path d="M16.4 27.8 L18.2 27.8 L18.9 35 L15.7 35 Z" fill="#efb025"/></svg>
</div></div>
</div>
<div id="sbar"><svg style="position:absolute;left:0;top:7px" width="14" height="9"><path d="M0 8 L6 1 L12.5 8 Z" fill="#777"/></svg><div style="position:absolute;left:0.5px;top:23px;width:10.5px;height:37px;border-radius:5px;background:#888"></div></div>
</div>
<div id="ft"><svg style="position:absolute;left:1575px;top:10px" width="85" height="22" viewBox="1575 858 85 22">
<defs><linearGradient id="ig" x1="0" y1="0" x2="0" y2="1"><stop offset="0" stop-color="#fff"/><stop offset="0.35" stop-color="#fff"/><stop offset="0.85" stop-color="#22c3c0"/><stop offset="1" stop-color="#10b8b5"/></linearGradient></defs>
<polygon fill="#fff" points="1581.1,877.3 1589.6,859.8 1593.0,859.8 1601.5,877.3 1597.4,877.3 1591.3,864.6 1585.2,877.3"/>
<polygon fill="#fff" points="1606.1,859.8 1609.7,859.8 1609.7,873.5 1619.6,873.5 1619.6,877.3 1606.1,877.3"/>
<polygon fill="url(#ig)" points="1625.6,859.8 1628.4,859.8 1628.2,877.3 1624.9,877.3"/>
<polygon fill="#fff" points="1633.1,877.3 1641.6,859.8 1644.9,859.8 1653.3,877.3 1649.2,877.3 1643.2,864.6 1637.2,877.3"/>
</svg></div>
</body></html>
